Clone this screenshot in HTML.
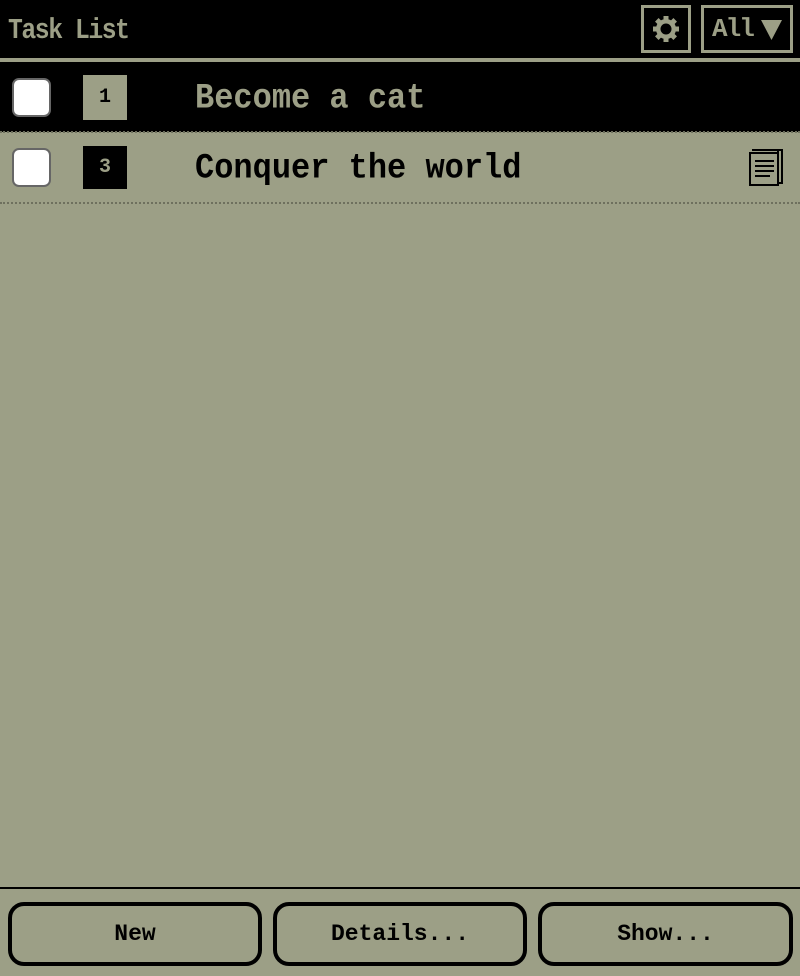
<!DOCTYPE html>
<html><head><style>
*{margin:0;padding:0;box-sizing:border-box}
body{width:800px;height:976px;background:#9c9f86;position:relative;overflow:hidden;font-family:"Liberation Mono",monospace;}
.abs{position:absolute}
.hdr{left:0;top:0;width:800px;height:58px;background:#000}
.title{left:8px;top:14px;color:#9c9f86;font-size:26px;font-weight:bold;letter-spacing:-1.5px;transform:scale(0.95,1.1);transform-origin:left top}
.box{border:3px solid #9c9f86;background:#000}
.row1{left:0;top:62px;width:800px;height:70px;background:#000}
.dot{left:0;width:800px;height:0;border-top:2px dotted #6e705e}
.cb{width:39px;height:39px;background:#fff;border:2px solid #666;border-radius:7px}
.txt{font-size:32px;font-weight:bold;transform:scaleY(1.1);transform-origin:left top}
.btn{top:902px;height:64px;border:4px solid #000;border-radius:16px;text-align:center;line-height:56px;font-size:23px;font-weight:bold}
</style></head><body>
<div class="abs hdr"></div>
<div class="abs title">Task List</div>
<div class="abs box" style="left:641px;top:5px;width:50px;height:48px;"></div>
<svg class="abs" style="left:651px;top:14px" width="30" height="30" viewBox="0 0 30 30"><g fill="#9c9f86"><circle cx="15" cy="15" r="10"/><rect x="12.5" y="2" width="5" height="26"/><rect x="2" y="12.5" width="26" height="5"/><rect x="12.5" y="2" width="5" height="26" transform="rotate(45 15 15)"/><rect x="12.5" y="2" width="5" height="26" transform="rotate(-45 15 15)"/></g><circle cx="15" cy="15" r="5.5" fill="#000"/></svg>
<div class="abs box" style="left:701px;top:5px;width:92px;height:48px;"></div>
<div class="abs" style="left:712px;top:14px;color:#9c9f86;font-size:26px;font-weight:bold;letter-spacing:-2px">All</div>
<svg class="abs" style="left:761px;top:19px" width="22" height="22"><polygon points="0,1 21,1 10.5,21" fill="#9c9f86"/></svg>
<div class="abs" style="left:0;top:58px;width:800px;height:4px;background:#9c9f86"></div>
<div class="abs row1"></div>
<div class="abs dot" style="top:131px"></div>
<div class="abs dot" style="top:202px"></div>
<div class="abs cb" style="left:12px;top:78px"></div>
<div class="abs" style="left:83px;top:75px;width:44px;height:45px;background:#9c9f86;text-align:center;line-height:45px;font-size:20px;font-weight:bold">1</div>
<div class="abs txt" style="left:195px;top:78px;color:#9c9f86">Become a cat</div>
<div class="abs cb" style="left:12px;top:148px"></div>
<div class="abs" style="left:83px;top:146px;width:44px;height:43px;background:#000;color:#9c9f86;text-align:center;line-height:43px;font-size:20px;font-weight:bold">3</div>
<div class="abs txt" style="left:195px;top:148px;color:#000">Conquer the world</div>
<svg class="abs" style="left:748px;top:149px" width="36" height="38"><path d="M2 4H30V36H2Z M30 4V1 M4 1H34V34H30" fill="none" stroke="#000" stroke-width="2"/><path d="M7 12H26M7 17H26M7 22H26M7 27H22" stroke="#000" stroke-width="2"/></svg>
<div class="abs" style="left:0;top:887px;width:800px;height:2px;background:#000"></div>
<div class="abs btn" style="left:8px;width:254px">New</div>
<div class="abs btn" style="left:273px;width:254px">Details...</div>
<div class="abs btn" style="left:538px;width:255px">Show...</div>
</body></html>
